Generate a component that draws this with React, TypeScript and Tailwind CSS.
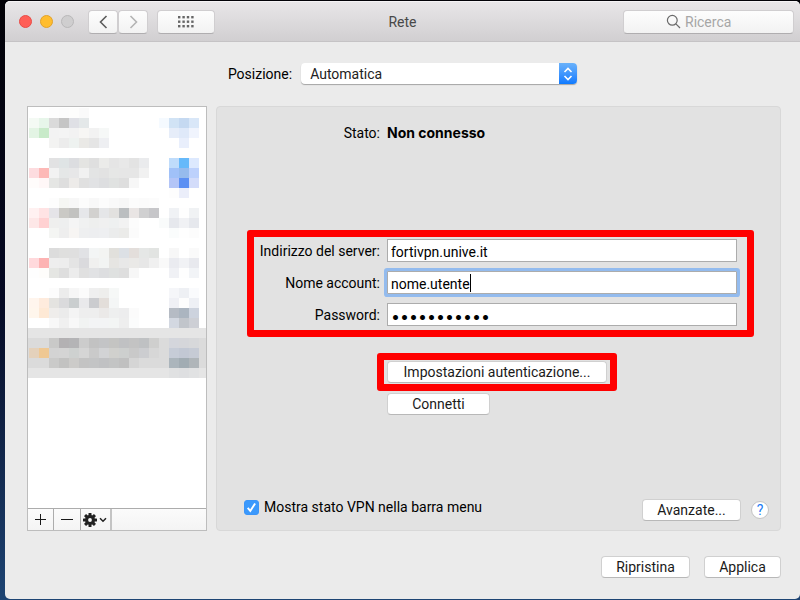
import { useState } from "react";
import type { ReactNode } from "react";

// Blurred service list: [row, first column, colours from left to right], 10px blocks.
const BLOCKS: [number, number, string][] = [
  [0, 2, "fdfdfd fcfcfc fdfdfc fafafa"],
  [1, 0, "f4faf4 e7f6ea dadada c5c5c5 dfe0e5 e4e8e9"],
  [1, 13, "f5faff d1e3f5 c5d9f1 d9e7f8"],
  [2, 0, "e3f4e4 c8eac9 f3f3f3 f4f4f4 f2f2f2 f7f6f4 f2f2f2 f6f8f7"],
  [2, 14, "e6edf9 dfe9f9 f0f4fd"],
  [3, 2, "f3f3f2 ececec eef2f0 eae9e6 e5e5e5 eeeff2"],
  [3, 15, "e9effc"],
  [5, 2, "e2e2e3 dfe4e5 dcdde0 e4e4e2 dfdfdf ebebe9 e5e5e5 e8e8e8 e3e3e3 eaebed"],
  [5, 14, "bfdcfb 66b9fa dde9fe"],
  [6, 0, "fddcdf fdb9b7 f2f2f2 e5e7e7 e7e7e8 f1f1f1 e3e4e4 e2e2e2 e6e7e6 e6e6e6 e6e6e6 f1f1f1"],
  [6, 14, "a0c1f8 96bbed bdd1fc"],
  [7, 0, "fffcfb fff7f7 e5e6e4 dedede edebe9 e0e0e0 e1e2e4 dddee0 e0e2e1 dedede f7f7f7"],
  [7, 14, "b3c5f7 5c90f3 d3dcfa"],
  [8, 14, "fdfdfd ebeefa"],
  [9, 2, "fdfdfd f5f6f3 f7f7f7 fcfcfc f8f8f8 fcfcfc f9f9f9 f7f7f7 fcfcfc fbfbfb fcfcfc"],
  [10, 0, "fff1f1 ffe3e4 e5e4e8 cac9c5 c2c2c0 e6e7ea d2d1cf e5e6e8 e2e1df bbbec0 e9e5e4 d0d0d1 c6c6c9"],
  [10, 14, "f0f2f5 fefefe f0f2f4"],
  [11, 0, "fde7e7 ffd1d2 efefee eeefef f5f5f5 f0f1f1 eeefee f0f0f0 eef0f0 f2f2f2 fcfcfc"],
  [11, 13, "f9fbfb e6e8ed f0f1f4 e6e8ed"],
  [12, 2, "f4f5f3 eeeeee f7f5f3 eeeff0 edeef0 eeeff1 ebecec ebebe9 fbfbfb"],
  [12, 14, "fafcfc fefefe fcfcfc"],
  [14, 2, "dcdcdc dfdfde dfdfdf e1e2e5 f3f5f5 f3f4f2 e1e0dc dce0e5 e3dedb e5e7e6 e2e4e2"],
  [14, 14, "f7f7f7 ffffff fafafa"],
  [15, 0, "ffd9dc fdb3b3 eeeeee ededed e4e4e4 dadadd f0f0ef f2f4f3 e6e5e2 e8e8e8 eae9e7 e7e7e7 f0f0f0 f9f9f9 eaebf0 f1f2f5 e8e9ee"],
  [16, 0, "fefefe fefdfb e5e6e3 dedede ececec e0e0e0 e1e2e4 dddee0 dfe1e0 dedede f7f7f7"],
  [16, 14, "f0f1f5 fefefe f2f4f7"],
  [18, 2, "fcfcfc ececec f6f6f6 fbfbfb efefef eeeeec f6f8f7"],
  [18, 14, "f5f6f9 eef0f4 fafbfd"],
  [19, 0, "fff5ed feebdd e4e3e0 dadadc cacecf e9e9eb cbcccf e3deda f4f6f6"],
  [19, 14, "eff0f5 fdfdfd eef0f5"],
  [20, 0, "fff6ec fee9d5 efedeb ebebeb f4f4f4 eeeeee eeeeee ebe9e8 eeefef ededee fbfbfb"],
  [20, 14, "b5bbc4 abb5c0 cdd3de"],
  [21, 2, "f8f8f8 f0f0f0 f8f8f8 f1f3f2 f3f4f5 f3f4f5 f3f5f4 eeeeee fbfcfc"],
  [21, 14, "d3d8e1 c1c5cb cdcfd5"],
  [23, 2, "c9c9c8 b3b1b3 b4b4b6 cccccc c2c2c2 c3c4c6 c4c4c2 c0c1c3 c3c3c3 bfc1c3 cfcfce"],
  [23, 14, "d4d6dc d5d6da d7d8da"],
  [24, 0, "e4d1bb efc893 d3d3d3 d4d4d4 ced1d0 d5d5d5 cacaca d2d3d5 d0d0cd cdcfce c9c9c9 cccdd0 d7d7d7"],
  [24, 14, "c6ccd7 c2c8d4 c6cbd5"],
  [25, 2, "cacac9 c2c2c1 cccbc9 c3c3c3 c3c4c5 c0c1c3 c3c4c4 c0c0c0 d5d5d5"],
  [25, 14, "abb5bc a1acb3 afb5b9"],
  [26, 14, "e0e1e2 dedfe1 e1e2e3"],
];

function ServiceList() {
  return (
    <svg className="block h-[272px] w-full" viewBox="0 0 178 272" preserveAspectRatio="xMinYMin slice" shapeRendering="crispEdges">
      <rect x="0" y="221" width="178" height="50" fill="#e5e5e5" />
      <rect x="0" y="231" width="178" height="30" fill="#dbdbdb" />
      {BLOCKS.map(([row, col, colours]) =>
        colours.split(" ").map((c, i) => (
          <rect key={`${row}-${col + i}`} x={1 + (col + i) * 10} y={1 + row * 10} width="10" height="10" fill={`#${c}`} />
        )),
      )}
    </svg>
  );
}

function PushButton({ className, children }: { className: string; children: ReactNode }) {
  return (
    <button
      type="button"
      className={`h-[22px] rounded border border-[#d0d0d0] border-b-[#b8b8b8] bg-white text-center leading-5 text-[#1a1a1a] ${className}`}
    >
      {children}
    </button>
  );
}

const toolButton =
  "flex h-6 items-center justify-center rounded border border-[#d0ced0] border-b-[#b0aeb0] bg-gradient-to-b from-[#fdfdfd] to-[#f2f2f2]";
const fieldClass = "block h-[23px] w-full border border-[#acacac] bg-white px-[3px] pt-[3px] text-black outline-none";
const labelClass = "whitespace-nowrap text-right";

export default function App() {
  const [location, setLocation] = useState("Automatica");
  const [server, setServer] = useState("fortivpn.unive.it");
  const [account, setAccount] = useState("nome.utente");
  const [password, setPassword] = useState("passwordvpn");
  const [showStatus, setShowStatus] = useState(true);

  return (
    <div className="flex min-h-screen flex-col bg-gradient-to-b from-[#020207] via-[#060a24] to-[#1d4473] pt-px pb-px pl-[5px] font-[Roboto,sans-serif] text-[14px] leading-5 text-black">
      <div className="flex flex-1 flex-col rounded-[5px] bg-[#ebebeb]">
        <header className="grid h-[41px] grid-cols-[1fr_auto_1fr] items-center rounded-t-[5px] border-t border-b border-t-[#f5f3f5] border-b-[#c5c3c5] bg-gradient-to-b from-[#e8e6e8] to-[#d1cfd1] px-[6px]">
          <div className="flex items-center pl-2">
            <div className="flex gap-2">
              <button type="button" aria-label="Chiudi" className="size-[13px] rounded-full border border-[#e94b47] bg-[#ff5f57]" />
              <button type="button" aria-label="Riduci" className="size-[13px] rounded-full border border-[#e2a22a] bg-[#ffbd2e]" />
              <button type="button" aria-label="Ingrandisci" disabled className="size-[13px] rounded-full border border-[#b9b8b9] bg-[#cfcecf]" />
            </div>
            <div className="ml-[14px] flex">
              <button type="button" aria-label="Indietro" className={`w-[30px] ${toolButton}`}>
                <svg width="9" height="14" viewBox="0 0 9 14" fill="none" stroke="#5c5c5c" strokeWidth="1.6">
                  <path d="M7.5 1 1.5 7l6 6" />
                </svg>
              </button>
              <button type="button" aria-label="Avanti" disabled className={`w-[30px] ${toolButton}`}>
                <svg width="9" height="14" viewBox="0 0 9 14" fill="none" stroke="#b4b4b4" strokeWidth="1.6">
                  <path d="m1.5 1 6 6-6 6" />
                </svg>
              </button>
            </div>
            <button type="button" aria-label="Mostra tutte" className={`ml-[9px] w-[58px] ${toolButton}`}>
              <svg width="16" height="12" viewBox="0 0 16 12" fill="#666">
                {[0, 4.5, 9].map((y) => [0, 4.4, 8.8, 13.2].map((x) => <rect key={`${x}-${y}`} x={x} y={y} width="2.4" height="2.4" />))}
              </svg>
            </button>
          </div>
          <h1 className="text-[#484848]">Rete</h1>
          <label className={`w-[171px] gap-1 justify-self-end ${toolButton}`}>
            <svg width="15" height="15" viewBox="0 0 15 15" fill="none" stroke="#6a6a6a" strokeWidth="1.2">
              <circle cx="6.3" cy="6.3" r="4.9" />
              <path d="m9.9 9.9 4.1 4.1" />
            </svg>
            <input type="search" aria-label="Ricerca" placeholder="Ricerca" className="w-[66px] bg-transparent outline-none placeholder:text-[#a6a6a6]" />
          </label>
        </header>

        <div className="mt-[21px] flex items-center justify-center gap-[9px]">
          <label htmlFor="location">Posizione:</label>
          <div className="relative">
            <select
              id="location"
              value={location}
              onChange={(e) => setLocation(e.target.value)}
              className="block h-[21px] w-[276px] appearance-none rounded bg-white pl-[9px] leading-5 text-[#222] shadow-[0_1px_1px_rgba(0,0,0,0.3)]"
            >
              <option>Automatica</option>
            </select>
            <span className="pointer-events-none absolute inset-y-0 right-0 flex w-[18px] items-center justify-center rounded-r bg-gradient-to-b from-[#69b1fa] to-[#0a7aff]">
              <svg width="10" height="14" viewBox="0 0 10 14" fill="none" stroke="#fff" strokeWidth="1.6">
                <path d="m1.5 5 3.5-3.5L8.5 5M1.5 9l3.5 3.5L8.5 9" />
              </svg>
            </span>
          </div>
        </div>

        <main className="mt-[22px] flex flex-1 gap-[9px] pr-[19px] pl-[22px]">
          <aside className="flex w-[180px] flex-col border border-[#bdbdbd] bg-white">
            <div className="flex-1">
              <ServiceList />
            </div>
            <div className="flex h-[22px] border-t border-[#acacac] bg-gradient-to-b from-[#fbfbfb] to-[#f4f4f4]">
              <button type="button" aria-label="Aggiungi" className="flex w-[26px] items-center justify-center border-r border-[#acacac]">
                <svg width="12" height="12" viewBox="0 0 12 12" stroke="#1a1a1a">
                  <path d="M5.5 0v11M0 5.500h11" />
                </svg>
              </button>
              <button type="button" aria-label="Rimuovi" className="flex w-[27px] items-center justify-center border-r border-[#acacac]">
                <svg width="12" height="12" viewBox="0 0 12 12" stroke="#1a1a1a">
                  <path d="M0 5.500h12" />
                </svg>
              </button>
              <button type="button" aria-label="Azioni" className="flex w-[31px] items-center gap-[2px] border-r-2 border-[#c4c4c4] pl-[2px]">
                <svg width="14" height="14" viewBox="-7 -7 14 14">
                  {[0, 45, 90, 135].map((a) => (
                    <rect key={a} x="-1.5" y="-7" width="3" height="14" rx="0.5" fill="#222" transform={`rotate(${a})`} />
                  ))}
                  <circle r="4.9" fill="#222" />
                  <circle r="1.9" fill="#f8f8f8" />
                </svg>
                <svg width="8" height="6" viewBox="0 0 8 6" fill="none" stroke="#222" strokeWidth="1.5">
                  <path d="m1 1.2 3 3 3-3" />
                </svg>
              </button>
            </div>
          </aside>

          <section className="flex flex-1 flex-col rounded border border-[#d8d8d8] bg-[#e2e2e2] pr-[26px] pl-[30px]">
            <div className="mt-4 grid grid-cols-[126px_1fr] gap-[7px] pl-[7px]">
              <span className={labelClass}>Stato:</span>
              <strong className="font-[Inter,sans-serif] font-bold">Non connesso</strong>
            </div>

            <div className="mt-[87px] grid grid-cols-[126px_1fr] items-center gap-x-[7px] gap-y-[9px] rounded-[3px] border-7 border-[#ff0000] pt-[2px] pr-[10px] pb-1">
              <label htmlFor="server" className={labelClass}>Indirizzo del server:</label>
              <input id="server" value={server} onChange={(e) => setServer(e.target.value)} className={fieldClass} />
              <label htmlFor="account" className={labelClass}>Nome account:</label>
              <div className="relative">
                <input
                  id="account"
                  value={account}
                  onChange={(e) => setAccount(e.target.value)}
                  className={`rounded-[1px] ring-3 ring-[#93bbee] ${fieldClass}`}
                />
                <span className="absolute top-[3px] left-[83px] h-[18px] w-px bg-black" />
              </div>
              <label htmlFor="password" className={labelClass}>Password:</label>
              <input
                id="password"
                type="password"
                value={password}
                onChange={(e) => setPassword(e.target.value)}
                className={`font-[Inter,sans-serif] text-[16px] ${fieldClass}`}
              />
            </div>

            <div className="mt-4 ml-[130px] flex flex-col items-start">
              <div className="rounded-[3px] border-7 border-[#ff0000] px-[3px] pt-px pb-px">
                <PushButton className="block w-[220px]">Impostazioni autenticazione...</PushButton>
              </div>
              <PushButton className="mt-[2px] ml-[10px] w-[103px]">Connetti</PushButton>
            </div>

            <div className="-ml-[3px] mt-auto mr-[-15px] mb-2 flex items-center">
              <label className="flex flex-1 items-center gap-[5px] pb-[5px]">
                <span className="relative size-[15px]">
                  <input
                    type="checkbox"
                    checked={showStatus}
                    onChange={(e) => setShowStatus(e.target.checked)}
                    className="peer block size-[15px] appearance-none rounded-[3px] border border-[#b5b5b5] bg-white checked:border-[#3b95f8] checked:bg-[#3b99fc]"
                  />
                  <svg className="pointer-events-none absolute inset-0 hidden peer-checked:block" viewBox="0 0 15 15" fill="none" stroke="#fff" strokeWidth="1.9">
                    <path d="m3.7 7.9 2.6 3 4.8-7.4" />
                  </svg>
                </span>
                Mostra stato VPN nella barra menu
              </label>
              <PushButton className="w-[99px]">Avanzate...</PushButton>
              <button type="button" aria-label="Aiuto" className="ml-[10px] size-[18px] rounded-full border border-[#c4c4c4] bg-white leading-4 text-[#1a7cf5]">
                ?
              </button>
            </div>
          </section>
        </main>

        <footer className="mt-[25px] mb-[21px] flex justify-end gap-[14px] pr-[19px]">
          <PushButton className="w-[89px]">Ripristina</PushButton>
          <PushButton className="w-[77px]">Applica</PushButton>
        </footer>
      </div>
    </div>
  );
}
